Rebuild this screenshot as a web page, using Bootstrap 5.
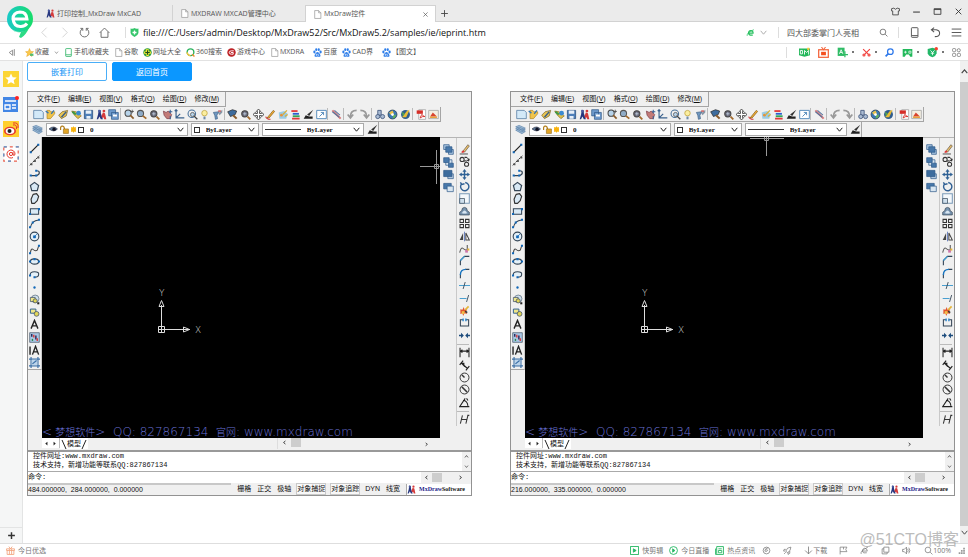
<!DOCTYPE html>
<html lang="zh-CN">
<head>
<meta charset="utf-8">
<meta name="viewport" content="width=device-width, initial-scale=1">
<title>MxDraw控件</title>
<link href="https://cdn.jsdelivr.net/npm/bootstrap@5.3.0/dist/css/bootstrap.min.css" rel="stylesheet">
<style>
:root{--ui:"Open Sans","Noto Sans CJK SC",sans-serif;--edge:#a5a5a5;--face:#f0f0f0}
body{font-family:var(--ui);font-size:7px;line-height:10px;color:#444;background:#fff}
svg{display:block;flex:none}
button{border:0;padding:0;background:none;color:inherit;font:inherit;line-height:inherit}
a{color:inherit;text-decoration:none}
input,select{border:0;padding:0;background:none;font:inherit;color:inherit;outline-offset:0;min-width:0}
select{appearance:none}
.ic{width:11px;height:11px}
.ic-s{width:9px;height:9px}
.big{width:16px;height:16px}

/* browser frame */
.strip{height:22px;background:#ebebeb;border-bottom:1px solid #d2d2d2}
.tabs{padding-left:39px;height:22px}
.tab-item{width:133px;height:17px;padding:0 7px;gap:2px;color:#555}
.tab-item+.tab-item{border-left:1px solid #d2d2d2}
.tab-item.current{width:131px;background:#fff;border:1px solid #d2d2d2;border-bottom:0}
.win{gap:12px;padding-right:5px;color:#333;height:22px}
.brand{position:absolute;left:6px;top:5px;width:28px;height:33px;z-index:3}
.addr{height:22px;border-bottom:1px solid #e2e2e2;padding-left:39px}
.addr .navs{gap:9px;width:87px;border-right:1px solid #ddd;height:11px;color:#555}
.addr .url{font-size:9px;color:#111}
.addr .tools{gap:10px;padding-right:6px;color:#555}
.addr .find{font-size:8px;width:82px}
.vline{width:1px;height:11px;background:#ddd}
.marks{height:17px;border-bottom:1px solid #e2e2e2;padding-left:7px;color:#555}
.marks .list{gap:5px}
.marks .list a{gap:1px}
.marks .exts{gap:8px;padding-right:7px}
.marks .exts>span{gap:4px}
.dot{width:2px;height:2px;background:#777}
.side{width:23px;background:#f5f6f6;border-right:1px solid #e3e4e4;padding-top:10px}
.side .apps{gap:9px}
.side .add{height:16px;border-top:1px solid #e3e4e4;color:#333}
.vbar{width:8px;background:var(--face);color:#444;padding:6px 0}
.vbar .thumb{background:#cdcdcd;margin:6px 0 2px}
.stage{padding:1px 5px 46px 4px}
.cmds{gap:5px;margin-bottom:10px}
.cmds .btn{width:80px;height:19px;font-size:8px;line-height:17px;padding:0;border-radius:2px;border:1px solid #49aef8;color:#1494f5}
.cmds .btn.fill{background:#0b97ff;border-color:#0b97ff;color:#fff}
.foot{height:14px;border-top:1px solid #dedede;padding:0 2px 0 6px;color:#777}
.foot a{gap:3px}
.foot .right{gap:6px}
.foot .minis{gap:12px;padding-right:7px;padding-left:1px}
.stamp{position:absolute;right:9px;bottom:8px;font:16px/18px "Liberation Sans","Noto Sans CJK SC",sans-serif;color:#999;opacity:.65;z-index:3}

/* drawing control */
.pair{gap:38px}
.cad{flex:1 1 0;min-width:0;background:var(--face);border:1px solid #929292;color:#111;font-family:"Liberation Sans","Noto Sans CJK SC",sans-serif}
.menus{height:15px;width:198px;border-right:1px solid var(--edge);border-bottom:1px solid var(--edge);padding-left:9px;gap:8px}
.hbar{height:15px;width:413px;max-width:100%;border-right:1px solid var(--edge);border-bottom:1px solid var(--edge);padding-left:4px}
.hbar button,.vtools button{flex:1 1 0;min-width:0;min-height:0;display:flex;align-items:center;justify-content:center}
.hsep{width:3px;height:12px;border-left:1px solid #bbb;flex:none}
.vsep{height:3px;width:12px;border-top:1px solid #bbb;flex:none;margin-top:2px}
.props{height:15px;width:351px;border-right:1px solid var(--edge);padding-left:4px;gap:3px}
.combo{height:13px;background:#fff;border:1px solid #aaa;padding:0 2px;gap:2px}
.combo select{font:700 7px/10px "Liberation Serif",serif;flex:1 1 auto;width:20px}
.c1{width:144px}.c2{width:69px}.c3{width:104px}
.line-sample{width:36px;height:1px;background:#333}
.sw{width:6px;height:6px;border:1px solid #333;background:#fff}
.vtools{width:15px;padding-top:5px}
.vtools.left{width:14px;height:233px;border-bottom:1px solid var(--edge);border-right:1px solid #ccc}
.vtools.a{height:56px;width:16px}
.vtools.b{height:288px;border-left:1px solid #c9c9c9;flex:none}
.rcol{border-top:1px solid #b5b5b5}
.view{background:#000;height:301px;overflow:hidden}
.view svg{position:absolute;inset:0;width:100%;height:100%}
.adline{position:absolute;left:0;bottom:-3px;color:#6870d4;font:200 12px/16px "DejaVu Sans","Noto Sans CJK SC",sans-serif;white-space:nowrap}
.adline b{font-weight:300;font-size:10px}
.tabrow{height:12px}
.arrows{width:18px;height:10px;background:#fff;border-right:1px solid #bbb}
.mini{width:5px;height:7px}
.sheet{width:28px;height:11px;background:#fff}
.hthumb{width:10px;height:9px;background:#cdcdcd}
.track{width:139px;padding-right:11px}
.hist{border-top:2px solid #999;height:21px;background:#fff;font:7px/9px "Liberation Mono","Noto Sans CJK SC",monospace}
.hist .txt{padding-left:5px}
.hist .sb{width:9px;background:var(--face)}
.prompt{border-top:1px solid #aaa;height:12px;background:#fff;font:7px/10px "Liberation Mono","Noto Sans CJK SC",monospace}
.prompt .sb{width:50px;background:var(--face);padding-left:3px;gap:3px}
.status{height:12px;gap:6px}
.status .pos{border-top:2px solid #c8c8c8;line-height:10px;height:12px;white-space:pre}
.status .on{outline:1px solid #c9c9c9;background:#f8f8f8}
.status .own{width:65px;height:11px;background:#fff;border-left:1px solid #aaa;font:700 6px/9px "Liberation Serif",serif;gap:3px}
.own b{color:#22228a}
</style>
</head>
<body>
<svg width="0" height="0" class="position-absolute" aria-hidden="true"><defs>
<linearGradient id="lg" x1="0" x2="1"><stop offset="0" stop-color="#19c9c9"/><stop offset="1" stop-color="#17dd68"/></linearGradient>
<g id="page"><path d="M3 1h7l4 4v10H3zM10 1v4h4" fill="#fff" stroke="#999" stroke-width="1.3"/></g>
<g id="mx"><path d="M4 1l3 1v4l3 9H7l-2-4-2 4H1l2-7z" fill="#26367f"/><circle cx="5" cy="3" r="2" fill="#4a5aa0"/><path d="M10 5l3 1 2 9h-3l-1-3-2 1-1-3z" fill="#d53a3a"/><circle cx="11.500" cy="3" r="2" fill="#d53a3a"/></g>
<g id="x" fill="none" stroke="currentColor" stroke-width="1.6"><path d="M3 3l10 10M13 3L3 13"/></g>
<g id="plus" fill="none" stroke="currentColor" stroke-width="1.6"><path d="M8 2v12M2 8h12"/></g>
<g id="plusb" fill="none" stroke="currentColor" stroke-width="2.6"><path d="M8 2v12M2 8h12"/></g>
<g id="shirt" fill="none" stroke="currentColor" stroke-width="1.4"><path d="M5 2L1 3v4h2v7h10V7h2V3l-4-1q-3 4-6 0z"/></g>
<g id="min" stroke="currentColor" stroke-width="1.8"><path d="M2 9h12"/></g>
<g id="max" fill="none" stroke="currentColor" stroke-width="1.5"><path d="M2 3h12v10H2zM2 4.5h12"/></g>
<g id="back" fill="none" stroke="#ccc" stroke-width="1.2"><path d="M11 1L4 8l7 7"/></g>
<g id="fwd" fill="none" stroke="#ccc" stroke-width="1.2"><path d="M5 1l7 7-7 7"/></g>
<g id="reload" fill="none" stroke="currentColor" stroke-width="1.2"><path d="M5 2.6a6.3 6.3 0 1 0 6 0M2 2h3.5v3.5M14 2h-3.5v3.5"/></g>
<g id="home" fill="none" stroke="currentColor" stroke-width="1.2"><path d="M1 8.500L8 1.500l7 7M3 7v8h10V7"/></g>
<g id="shield"><path d="M1 1q5 1 7-1 2 2 7 1v8q-1 5-7 7-6-2-7-7z" fill="#35c66b"/><path d="M8 4.500v7M4.500 8h7" stroke="#fff" stroke-width="2.400"/></g>
<g id="e" fill="none" stroke="#26c05f" stroke-width="2.200"><path d="M4.500 9h8Q13 5 8.500 4.500 4.500 5 4.500 9q.5 4.500 7.500 3.500"/><path d="M2 14q-1-6 12-11" stroke-width="1.300"/></g>
<g id="down" fill="none" stroke="currentColor" stroke-width="1.7"><path d="M3 5l5 6 5-6"/></g>
<g id="up" fill="none" stroke="currentColor" stroke-width="2"><path d="M3 11l5-6 5 6"/></g>
<g id="lt" fill="none" stroke="currentColor" stroke-width="2.500"><path d="M11 3L5 8l6 5"/></g>
<g id="rt" fill="none" stroke="currentColor" stroke-width="2.500"><path d="M5 3l6 5-6 5"/></g>
<g id="tl" fill="#222"><path d="M11 2v12L4 8z"/></g><g id="tr" fill="#222"><path d="M5 2v12l7-6z"/></g>
<g id="mag" fill="none" stroke="currentColor" stroke-width="1.3"><circle cx="7" cy="7" r="5"/><path d="M11 11l4 4"/></g>
<g id="phone" fill="none" stroke="currentColor" stroke-width="1.400"><rect x="3.500" y="1" width="9.500" height="14" rx="1"/><path d="M4 12.500h9"/></g>
<g id="gphone" fill="none" stroke="#39b86d" stroke-width="1.500"><rect x="3" y="1" width="10" height="14" rx="1"/><path d="M3 12h10"/></g>
<g id="undo2" fill="none" stroke="currentColor" stroke-width="1.500"><path d="M6 1L2 4l4 3.500M2 4h7q5 1 5 5 0 5-7 5"/></g>
<g id="burger" stroke="currentColor" stroke-width="1.400"><path d="M1 3h14M1 8h14M1 13h14"/></g>
<g id="collapse" fill="none" stroke="#777" stroke-width="1.400"><path d="M10 4L4 8l6 5zM13 2v12"/></g>
<g id="star"><path d="M8 1l2 5 5 .5-4 3.500 1 5-4-3-5 3 1.500-5L1 6.500 6 6z" fill="#fbc94b" stroke="#e8a92c"/><path d="M9 10h6v4H9z" fill="#54bd72"/></g>
<g id="hao"><circle cx="8" cy="8" r="7.500" fill="#2d9e3c"/><path d="M5 2h5v4h4v4h-4v4H6v-4H2V6h3z" fill="#ffe735"/><path d="M4 8h8M8 4v8" stroke="#174f1c" stroke-width="2"/></g>
<g id="ring" fill="none" stroke-width="2.400"><circle cx="8" cy="7.500" r="6" stroke="#26b15b"/><path d="M8 13.500a6 6 0 0 1-6-6" stroke="#ffc53c"/><path d="M11 11l4 4" stroke="#f08d2e"/></g>
<g id="game"><circle cx="8" cy="8" r="7.500" fill="#bd2227"/><path d="M12 5H8q-4 0-4 3t4 3h3V8H7" stroke="#fff" fill="none" stroke-width="1.700"/></g>
<g id="paw" fill="#2d7de9"><ellipse cx="2.500" cy="7" rx="2" ry="2.600"/><ellipse cx="5.800" cy="3" rx="1.900" ry="2.500"/><ellipse cx="10.200" cy="3" rx="1.900" ry="2.500"/><ellipse cx="13.500" cy="7" rx="2" ry="2.600"/><path d="M8 7q2 0 4 3t1 5q-2 1-5 0-3 1-5 0-1-2 1-5t4-3z"/><path d="M5.500 11h1.500v2H5.500zM9 10v3h2" stroke="#fff" fill="none"/></g>
<g id="bm"><path d="M0 2h16v10l-8 2-8-2z" fill="#22b75a"/><path d="M2 5h3v5H2zM8 11V5l3 3 3-3v6" fill="none" stroke="#fff" stroke-width="1.300"/><path d="M12 1h3v4l-1.500-1L12 5z" fill="#ffc83a"/></g>
<g id="tv"><rect x="1" y="4" width="14" height="11" fill="none" stroke="#f4633a" stroke-width="1.800"/><rect x="4.500" y="7" width="7" height="5" fill="#f4501f"/><path d="M5 0l3 4 3-4" stroke="#f4633a" stroke-width="1.500" fill="none"/></g>
<g id="trans"><path d="M1 1h10v12H1z" fill="#2fbc66"/><path d="M3.500 10L6 4l2.500 6M4.500 8h3" stroke="#fff" fill="none" stroke-width="1.200"/><path d="M11.500 6v9M7 11h9" stroke="#2fbc66" stroke-width="1.800"/></g>
<g id="cut" fill="none" stroke="#f1403c" stroke-width="2"><path d="M2 2l9 9M14 2l-9 9"/><circle cx="3.500" cy="12.500" r="1.800"/><circle cx="12.500" cy="12.500" r="1.800"/></g>
<g id="bmag" fill="none" stroke="#2d78ea" stroke-width="2.200"><circle cx="9.500" cy="6.500" r="5"/><path d="M6 10l-5 5" stroke-width="3"/></g>
<g id="pad"><path d="M1 3h14v11h-3l-2-3H6l-2 3H1z" fill="#22b95b"/><path d="M3 7.500h4M5 5.500v4M10 6h3v3h-3z" stroke="#fff" fill="none"/></g>
<g id="gsh"><path d="M1 3l7-2 6 2v6q-1 4-6 6-6-2-7-6z" fill="#22b768"/><path d="M5 5l3 3 3-3M8 8v4M5.500 9h5" stroke="#fff" fill="none" stroke-width="1.200"/><circle cx="13.500" cy="2.500" r="2.500" fill="#f3432f"/></g>
<g id="grid4" fill="none" stroke="#777" stroke-width="1.400"><rect x="1" y="1" width="5.500" height="5.500" rx="1.500"/><circle cx="12" cy="4" r="2.800"/><rect x="1" y="9.500" width="5.500" height="5.500" rx="1.500"/><rect x="9.500" y="9.500" width="5.500" height="5.500" rx="1.500"/></g>
<g id="sstar"><rect width="16" height="16" fill="#fcd535"/><path d="M8 2.500l1.700 3.700 4 .4-3 2.700.9 4L8 11.300l-3.600 2 .9-4-3-2.700 4-.4z" fill="#fff"/></g>
<g id="snews"><rect y="1" width="15" height="15" fill="#4286e5"/><path d="M2 5h11M2 9h5v4H2zM9 9h4M9 12h4" stroke="#fff" stroke-width="1.300" fill="none"/><circle cx="14" cy="2" r="2" fill="#f22"/></g>
<g id="sweibo"><rect width="16" height="16" fill="#ffcf2e"/><ellipse cx="7" cy="10" rx="6" ry="4.300" fill="#e6392e"/><ellipse cx="7" cy="10" rx="4.300" ry="3" fill="#fff"/><circle cx="6.500" cy="10" r="2" fill="#222"/><path d="M10 4q4-1 3.500 4M10 2q6-1 5 5" fill="none" stroke="#e6392e"/></g>
<g id="sat"><rect x=".8" y=".8" width="14.400" height="14.400" fill="#fff" stroke="#e9604e" stroke-width="1.200" stroke-dasharray="3 3"/><rect x=".8" y=".8" width="14.400" height="14.400" fill="none" stroke="#4a9bdc" stroke-width="1.200" stroke-dasharray="3 9"/><circle cx="8" cy="8" r="1.600" fill="none" stroke="#e6392e"/><path d="M10 6v3q2 1 2-1a4 4 0 1 0-2 3.500" fill="none" stroke="#e6392e"/></g>
<g id="gift" fill="none" stroke="#f2a27c" stroke-width="1.500"><path d="M1 5h14v3H1zM2 8v7h12V8M6 5v10M10 5v10M8 5L5 1M8 5l3-4"/></g>
<g id="clip" fill="none" stroke="#26b862" stroke-width="1.600"><rect x="1" y="1" width="14" height="14"/><path d="M6 5l5 3-5 3z" fill="#26b862"/></g>
<g id="live" fill="none" stroke="#26b862" stroke-width="1.600"><circle cx="8" cy="8" r="7"/><path d="M6.500 5l4 3-4 3z" fill="#26b862"/></g>
<g id="hot" fill="none" stroke="#26b862" stroke-width="1.600"><path d="M3 1h12v14H1V5h2zM3 5v9M6 5h6M6 8h6v4H6z"/></g>
<g id="f1" fill="none" stroke="currentColor" stroke-width="1.300"><circle cx="8" cy="8" r="6"/><path d="M11 3q-6 1-6 6 3 2 5-1 0-2-3-1"/></g>
<g id="f2" fill="none" stroke="currentColor" stroke-width="1.300"><path d="M14 2Q7 2 5 9l3 3q6-3 6-10zM5 6H2l-1 3h3M9 11v4l3-2V9M5 11l-3 3"/></g>
<g id="dl" fill="none" stroke="currentColor" stroke-width="1.400"><path d="M8 1v13M2 8l6 6 6-6"/></g>
<g id="flag" fill="none" stroke="currentColor" stroke-width="1.300"><path d="M2 15V2h12l-2 4 2 4H2M8 2v4"/></g>
<g id="f3" fill="none" stroke="currentColor" stroke-width="1.300"><path d="M4 9h9q0-5-5-5-4 1-4 5 1 5 8 3M2 14q-2-5 12-12"/></g>
<g id="f4" fill="none" stroke="currentColor" stroke-width="1.300"><path d="M5 2h9v9H5zM5 5H2v9h9v-3"/></g>
<g id="vol" fill="none" stroke="currentColor" stroke-width="1.300"><path d="M1 6h3l4-4v12l-4-4H1zM10 5q2 3 0 6M12 3q4 5 0 10"/></g>
<g id="rsz" fill="#999"><path d="M11 3h3v3h-3zM11 7h3v3h-3zM7 7h3v3H7zM11 11h3v3h-3zM7 11h3v3H7zM3 11h3v3H3z"/></g>

<!-- drawing tools -->
<g id="new"><path d="M1 2h11l3 3v9H1z" fill="#d3e9f8" stroke="#456f99"/></g>
<g id="open"><path d="M3 2h4l1 2h6v3L8 14H3z" fill="#f0c44a" stroke="#b08420"/><path d="M9 7l4-5M1 3l4 3" stroke="#3577b8" stroke-width="2"/></g>
<g id="opens"><path d="M1 9l5-5 8-2-2 8-7 4z" fill="#e8c553" stroke="#7b6022"/><path d="M5 12l7-8" stroke="#3a5f8a" stroke-width="2"/></g>
<g id="web"><path d="M1 3l6 1 8 6-5 4-5-5z" fill="#dfbe4d" stroke="#8a6d1e"/><circle cx="11" cy="6" r="3.500" fill="#3b8ad0"/><path d="M2 4l5 4" stroke="#3d9a47" stroke-width="3"/></g>
<g id="save"><path d="M2 2h12v12H2z" fill="#4e7fb9" stroke="#1f4574"/><path d="M4 2h8v5H4zM5 10h6v4H5z" fill="#e7eff8"/></g>
<g id="saves"><path d="M1 1h10v9H1zM5 5h10v10H5z" fill="#6f9bcd" stroke="#2a5485"/><path d="M7 8h6v3H7z" fill="#fff"/></g>
<g id="zoomp"><circle cx="6" cy="6" r="4.500" fill="#b7d3ea" stroke="#444" stroke-width="1.500"/><path d="M9 9l5 5" stroke="#8a5c2c" stroke-width="2.500"/><path d="M12 1v5M9.500 3.500h5" stroke="#333"/></g>
<g id="zoom"><circle cx="6.500" cy="6.500" r="4.500" fill="#8fabc6" stroke="#555" stroke-width="1.500"/><path d="M10 10l5 4" stroke="#a36a2c" stroke-width="2.600"/></g>
<g id="zooma"><circle cx="7" cy="7" r="4.500" fill="#667" stroke="#444" stroke-width="1.500"/><path d="M4.500 7h5M7 4.500v5" stroke="#cde"/><path d="M11 11l4 4" stroke="#a36a2c" stroke-width="2.500"/></g>
<g id="hand"><path d="M2 3l4 2 3-2 5 5-2 6H7L3 9z" fill="#c37b78" stroke="#7a3c48"/><path d="M12 1v5M10 4h5M12 10v5" stroke="#345f94" stroke-width="1.500"/></g>
<g id="axes" fill="none" stroke="#3a618c" stroke-width="1.700"><path d="M3 1v12h12M3 13l6-6M1 3l2-2 2 2"/></g>
<g id="orbit"><circle cx="7" cy="7" r="5.500" fill="none" stroke="#456f99" stroke-width="1.500"/><circle cx="8" cy="8" r="3" fill="#b7d3ea" stroke="#444"/><path d="M10 10l5 5" stroke="#444" stroke-width="2"/></g>
<g id="bulb"><circle cx="8" cy="6" r="4" fill="#fbeea0" stroke="#b99b2f"/><path d="M6.500 11h3v4h-3z" fill="#718daa"/></g>
<g id="filter"><path d="M2 5l8-1-3 5 1 5-3 1-1-6z" fill="#7199c1" stroke="#3c5f85"/><path d="M9 6l6-5v4l-4 4z" fill="#8a97a6"/><path d="M9 3h4" stroke="#c55" stroke-width="2"/></g>
<g id="prev"><path d="M1 4l7-3 6 2-2 5-7 3z" fill="#3e6c9d" stroke="#222"/><path d="M9 9l5 5" stroke="#8a5c2c" stroke-width="3"/></g>
<g id="pan" fill="#fff" stroke="#333" stroke-width="1.200"><path d="M8 0l3 3.500H9.500v3h3V5L16 8l-3.500 3V9.500h-3v3H11L8 16l-3-3.500h1.500v-3h-3V11L0 8l3.500-3v1.500h3v-3H5z"/></g>
<g id="pen"><path d="M3 13L12 2l2 1.500L6 13z" fill="#efad35" stroke="#855914"/><path d="M1 11q1 4 7 4" fill="none" stroke="#c33" stroke-width="1.500"/></g>
<g id="palette"><path d="M1 5l8-2 5 4-2 7H2z" fill="#9bcce5"/><circle cx="5" cy="9" r="2" fill="#e79237"/><path d="M7 8l6-6M10 11l4-3" stroke="#d7b03d" stroke-width="2"/></g>
<g id="layersc" stroke-width="2.600"><path d="M2 3h9" stroke="#e23a3a"/><path d="M4 7h9" stroke="#2d5ecf"/><path d="M4 10.500h10" stroke="#31a558"/><path d="M3 14h11" stroke="#df3b3b"/></g>
<g id="brush"><path d="M15 1l-6 9-3-2z" fill="#333"/><path d="M4 9l5 2h5v3H1z" fill="#222"/></g>
<g id="scalebox" fill="#fff" stroke="#4a83b7" stroke-width="1.300"><path d="M1 2h14v12H1zM5 11l6-6M7 5h4v4"/></g>
<g id="dims"><path d="M2 2l8 8 4 4" stroke="#d97a7a" stroke-width="3"/><path d="M2 4l10 8M5 2l8 7" stroke="#58749c" stroke-width="1.500"/></g>
<g id="undo" fill="none" stroke="#999" stroke-width="2.600"><path d="M14 2Q5 2 5 11M1 8l4 5 4-5"/></g>
<g id="redo" fill="none" stroke="#999" stroke-width="2.600"><path d="M2 2q9 0 9 9M7 8l4 5 4-5"/></g>
<g id="find" fill="#a9bbd3" stroke="#3f557c" stroke-width="1.200"><path d="M4 2h5v7H4z"/><circle cx="4" cy="11" r="3"/><circle cx="11" cy="11" r="3"/></g>
<g id="globe"><circle cx="8" cy="8" r="6.500" fill="#3a78b4" stroke="#234"/><path d="M3 5l5-3 2 4-4 3z" fill="#ecc348"/><path d="M9 9l4-1-1 4-4 2z" fill="#62b356"/><circle cx="8" cy="8" r="2" fill="#fff"/></g>
<g id="globe2"><circle cx="8" cy="8" r="6.500" fill="#2f5c8f"/><path d="M3 12l7-9 4-2-5 11z" fill="#e9bb36"/><path d="M3 4l4 3-3 4z" fill="#55a84e"/></g>
<g id="pdf"><path d="M4 1h10v14H4z" fill="#fff" stroke="#999"/><path d="M1 2h9v5H1z" fill="#d52d27"/><path d="M6 13q3-7 3-5t4 3q-3-1-7 2" fill="none" stroke="#d52d27" stroke-width="1.300"/></g>
<g id="pic"><path d="M1 2h14v12H1z" fill="#f4efe3" stroke="#999"/><path d="M3 11l4-6 3 3 3 3z" fill="#d9432e"/><path d="M3 12h10" stroke="#e89b32" stroke-width="2"/></g>
<g id="layers" fill="#9fbdd8" stroke="#5c82a9"><path d="M1 9l5-2 9 4-5 3zM1 6.500l5-2 9 4-5 3zM1 4l5-2 9 4-5 3z"/></g>
<g id="eye"><path d="M0 7q8-7 15 0-6 7-15 0z" fill="#5b7896" stroke="#223" /><circle cx="9" cy="7.500" r="3" fill="#112"/></g>
<g id="lock"><path d="M1 9V5q1-4 4-3t3 5" fill="none" stroke="#b17d19" stroke-width="2.200"/><path d="M6 7h9v8H6z" fill="#e2a628" stroke="#8f6310"/></g>
<g id="sun"><path d="M8 0l2.400 3 3.600-1-.5 3.500L16 8l-2.500 2.400.5 3.600-3.600-1L8 16l-2.400-3L2 14l.5-3.600L0 8l2.500-2.500L2 2l3.600 1z" fill="#f7b20d"/></g>

<g id="line"><path d="M2 14L14 2" stroke="#222" stroke-width="1.700"/><path d="M1 12h3v3H1zM12 1h3v3h-3z" fill="#1268b8"/></g>
<g id="xline"><path d="M1 15L15 1" stroke="#333" stroke-width="1.400" stroke-dasharray="4 2"/><path d="M2 12h3v3H2zM7 7h3v3H7zM12 2h3v3h-3z" fill="#555"/></g>
<g id="pline"><path d="M3 11h8q4-1 4-4t-4-3" fill="none" stroke="#345" stroke-width="1.700"/><path d="M1 9.500h3v3H1zM9 9.500h3v3H9zM9 2.500h3v3H9z" fill="#1268b8"/></g>
<g id="poly"><path d="M8 2l6 4.500L12 14H4L2 6.500z" fill="#d9e9f5" stroke="#345" stroke-width="1.700"/></g>
<g id="blob"><path d="M6 2l5-1 3 4-2 6-4 4H4l-1-6z" fill="#d9e9f5" stroke="#333" stroke-width="1.700" stroke-linejoin="round"/></g>
<g id="rect"><path d="M2 4h12v8H2z" fill="#d9e9f5" stroke="#345" stroke-width="1.500"/><path d="M0 10h3v3H0zM13 3h3v3h-3z" fill="#1268b8"/></g>
<g id="arc"><path d="M2 14Q4 4 14 3" fill="none" stroke="#345" stroke-width="1.600"/><path d="M0 12h3v3H0zM4 5h3v3H4zM13 1h3v3h-3z" fill="#1268b8"/></g>
<g id="circ"><circle cx="8" cy="8" r="6.300" fill="#e4f0f8" stroke="#345" stroke-width="1.600"/><path d="M8 8l4-4M6.500 7h3v3h-3z" stroke="#1268b8" fill="#1268b8"/></g>
<g id="spline"><path d="M2 13Q3 5 6 8t6 1l2-6" fill="none" stroke="#444" stroke-width="1.500"/><path d="M0 12h3v3H0zM13 1h3v3h-3z" fill="#1268b8"/></g>
<g id="ell"><ellipse cx="8" cy="8" rx="6" ry="3.800" fill="#e4f0f8" stroke="#345" stroke-width="1.700"/><path d="M0 6.500h3v3H0zM13 6.500h3v3h-3zM6.500 3h3v3h-3z" fill="#1268b8"/></g>
<g id="ella"><path d="M2 9Q1 4 8 4t6 4q0 4-6 4" fill="#e4f0f8" stroke="#345" stroke-width="1.600"/><path d="M0 8h3v3H0zM6.500 10.500h3v3h-3z" fill="#1268b8"/></g>
<g id="pt"><circle cx="8" cy="8" r="1.700" fill="#1268b8"/></g>
<g id="blk"><circle cx="9" cy="7" r="5.500" fill="#cfe0ec" stroke="#567"/><path d="M2 5h7v6H2z" fill="#efe68a" stroke="#346"/><circle cx="9" cy="10" r="3" fill="#e0d458" stroke="#346"/><path d="M12 12h3v3h-3z" fill="#222"/></g>
<g id="blk2"><path d="M2 3h8v6H2z" fill="#efe68a" stroke="#2c5f92" stroke-width="1.400"/><circle cx="11" cy="10" r="3.500" fill="#e0d458" stroke="#346"/></g>
<g id="txt" fill="none" stroke="#222" stroke-width="2"><path d="M3 14L8 2l5 12M5 10h6"/></g>
<g id="hatch"><path d="M1 1h14v14H1z" fill="#a9c6e4" stroke="#456"/><path d="M3 3h2v4H3zM9 5h2v6H9z" fill="#225"/><path d="M6 4h2v4H6zM11 9h2v4h-2z" fill="#d33"/><path d="M4 10h2v3H4z" fill="#2a8a4a"/></g>
<g id="mtxt" fill="none" stroke="#222" stroke-width="2"><path d="M1.500 2v12M5 14l4.500-12L14 14M6 10h6.500"/></g>
<g id="frame" fill="none" stroke="#3a6ea5" stroke-width="1.700"><path d="M3 0v16M13 0v16M0 3h16M0 13h16"/><path d="M4 4h8v8H4z" fill="#bcd4ea" stroke="none"/><path d="M5 10l6-5"/></g>

<g id="o1" fill="#4878aa" stroke="#2b5888"><path d="M1 1h8v7H1z" fill="#a8c4df"/><path d="M8 8h7v7H8z" fill="#a8c4df"/><path d="M4 4h9v8H4z"/></g>
<g id="o2" fill="#4878aa" stroke="#2b5888"><path d="M4 4h9v8H4z" fill="#d9e6f1"/><path d="M1 1h8v7H1zM8 9h7v6H8z"/></g>
<g id="o3" stroke="#2b5888"><path d="M7 7h8v7H7z" fill="#b8cde2"/><path d="M1 2h12v9H1z" fill="#3d6c9d"/></g>
<g id="o4" stroke="#2b5888"><path d="M1 2h11v8H1z" fill="#4878aa"/><path d="M6 6h9v8H6z" fill="#d9e6f1"/></g>
<g id="erase"><path d="M6 10l7-9 2 2-7 9z" fill="#e7c06a" stroke="#654"/><path d="M3 12l3-3 2 2-2 2z" fill="#d33"/><path d="M1 14.500h12" stroke="#333" stroke-width="1.200"/></g>
<g id="copy" fill="none" stroke="#333" stroke-width="1.500"><circle cx="4.500" cy="5" r="3"/><circle cx="11" cy="12" r="3"/><path d="M8 2h3q3 1 3 5M11 6l3 1 1-3M7 8q2-2 4 0"/></g>
<g id="move" fill="#2f6195"><path d="M8 0l3 4H9v3h3V5l4 3-4 3V9H9v3h2l-3 4-3-4h2V9H4v2L0 8l4-3v2h3V4H5z"/></g>
<g id="rot" fill="none" stroke="#2f5f93" stroke-width="2"><path d="M4 4a6 6 0 1 0 5-1.800M2 2l2 3 4-1"/></g>
<g id="scale"><path d="M1 1h14v14H1z" fill="#f4f8fb" stroke="#7b9ab8" stroke-width="1.500"/><path d="M1 8h7v7H1z" fill="#cfe0ee" stroke="#345"/></g>
<g id="off"><path d="M1 13V9l3-2q0-5 4-5t4 5l3 2v4z" fill="#7894b0" stroke="#345"/><path d="M5 11V9q3-5 6 0v2z" fill="#d7e5f1"/></g>
<g id="arr" fill="none" stroke="#333" stroke-width="1.500"><path d="M1.500 2h5v4.500h-5zM9.500 2h5v4.500h-5zM1.500 9.500h5V14h-5zM9.500 9.500h5V14h-5z"/></g>
<g id="mir"><path d="M6 3v10H1z" fill="#444"/><path d="M10 3v10h5z" fill="#fff" stroke="#444" stroke-width="1.500"/><path d="M8 1v14" stroke="#35a"/></g>
<g id="sped"><path d="M1 14Q3 5 6 8t6 2V3" fill="none" stroke="#555" stroke-width="1.500"/><path d="M9 10h4v4H9z" fill="#c7a"/><path d="M12 8h3v3h-3z" fill="#e5b53a"/></g>
<g id="cham" fill="none" stroke="#345" stroke-width="1.600"><path d="M2 15V8l6-6h7" /><path d="M2 8l6-6" stroke="#38a0dc"/></g>
<g id="fil" fill="none" stroke="#345" stroke-width="1.600"><path d="M2 15V9M9 2h6"/><path d="M2 10q0-8 8-8" stroke="#1774c0" stroke-width="2"/></g>
<g id="trim" fill="none"><path d="M0 8h16" stroke="#4a9fd0" stroke-width="1.500"/><path d="M9 3l-3 10" stroke="#345" stroke-width="1.300"/></g>
<g id="ext" fill="none"><path d="M1 8h10" stroke="#4a9fd0" stroke-width="1.500"/><path d="M14 3l-3 10" stroke="#345" stroke-width="1.300"/></g>
<g id="boom"><path d="M2 6l3 1 2-4 1 4 4-1-2 4 2 3-4-1-2 4-1-4-3 1z" fill="#e2542c"/><path d="M9 7l5-5" stroke="#e5b53a" stroke-width="2.500"/><path d="M4 9h4v4H4z" fill="#f0c24a"/><path d="M9 9l3 2" stroke="#333" stroke-width="2"/></g>
<g id="brk" fill="none" stroke="#345" stroke-width="1.500"><path d="M6 4H2v9h12V4h-4"/><path d="M6 2v4M10 2v4" stroke="#2a86d0" stroke-width="2"/></g>
<g id="join" fill="#1c4b7c"><path d="M0 7h3V4l4 4-4 4V9H0zM16 7h-3V4L9 8l4 4V9h3z"/></g>
<g id="dlin" fill="none" stroke="#222" stroke-width="1.500"><path d="M1.500 1v14M14.500 1v14M2 6h12M5 4L2 6l3 2M11 4l3 2-3 2"/></g>
<g id="dali" fill="none" stroke="#222" stroke-width="1.700"><path d="M4 5l8 7M1 7l5-6M10 15l5-6M4 5h3v3z"/></g>
<g id="drad" fill="none" stroke="#333" stroke-width="1.400"><circle cx="8" cy="8" r="6.500"/><path d="M8 8L4 4" stroke-width="2"/></g>
<g id="ddia" fill="none" stroke="#333" stroke-width="1.400"><circle cx="8" cy="8" r="6.500"/><path d="M4 4l8 8" stroke-width="2.400"/></g>
<g id="dang" fill="none" stroke="#222" stroke-width="1.500"><path d="M15 14H1L9 2M6 5q6 0 7 8M11 2l2 3"/></g>
<g id="ded" fill="none" stroke="#333" stroke-width="1.500"><path d="M5 2L2 14M13 2l-3 12M4 8h8M12 2h3"/></g>
</defs></svg>

<div class="d-flex flex-column min-vh-100 position-relative">
<header>
  <svg class="brand" viewBox="0 0 28 33" aria-label="浏览器"><path d="M6 25q8 5 17-2-3 7-8 10l-2-1 2-5q-5 1-9-2z" fill="#2ddb85"/><circle cx="14" cy="14" r="13" fill="url(#lg)"/><path d="M7 14h14q-.5-7-7-7-7 .5-7 7 1 8 8 7.500 4-.3 6-3" fill="none" stroke="#fff" stroke-width="3"/></svg>
  <div class="strip d-flex justify-content-between">
    <nav class="tabs d-flex align-items-end" aria-label="标签页">
      <a href="#" class="tab-item d-flex align-items-center"><svg class="ic-s" viewBox="0 0 16 16"><use href="#mx"/></svg>打印控制_MxDraw MxCAD</a>
      <a href="#" class="tab-item d-flex align-items-center"><svg class="ic-s" viewBox="0 0 16 16"><use href="#page"/></svg>MXDRAW MXCAD管理中心</a>
      <a href="#" class="tab-item current d-flex align-items-center"><svg class="ic-s" viewBox="0 0 16 16"><use href="#page"/></svg>MxDraw控件<svg class="mini ms-auto" viewBox="2 2 12 12"><use href="#x"/></svg></a>
      <button class="px-1 mb-1" aria-label="新标签页"><svg class="ic-s" viewBox="0 0 16 16"><use href="#plus"/></svg></button>
    </nav>
    <div class="win d-flex align-items-center">
      <button aria-label="皮肤" data-i="shirt"></button><button aria-label="最小化" data-i="min"></button><button aria-label="最大化" data-i="max"></button><button aria-label="关闭" data-i="x"></button>
    </div>
  </div>
  <div class="addr d-flex align-items-center">
    <div class="navs d-flex align-items-center flex-shrink-0"><button aria-label="后退" data-i="back" data-c="ic"></button><button aria-label="前进" data-i="fwd" data-c="ic"></button><button aria-label="刷新" data-i="reload" data-c="ic"></button><button aria-label="主页" data-i="home" data-c="ic"></button></div>
    <svg class="ic-s ms-1" viewBox="0 0 16 16"><use href="#shield"/></svg>
    <input class="url flex-grow-1 ms-1" aria-label="地址" value="file:///C:/Users/admin/Desktop/MxDraw52/Src/MxDraw5.2/samples/ie/ieprint.htm">
    <div class="tools d-flex align-items-center">
      <button aria-label="极速模式" class="d-flex align-items-center gap-1"><svg class="ic-s" viewBox="0 0 16 16"><use href="#e"/></svg><svg class="ic-s" viewBox="0 0 16 16" color="#aaa"><use href="#down"/></svg></button>
      <span class="d-flex align-items-center gap-2"><i class="vline"></i><input class="find" aria-label="搜索" value="四大部委掌门人亮相"></span>
      <button aria-label="搜索" data-i="mag"></button><i class="vline"></i>
      <button aria-label="手机" data-i="phone" data-c="ic"></button><button aria-label="恢复" data-i="undo2" data-c="ic"></button><button aria-label="菜单" data-i="burger" data-c="ic"></button>
    </div>
  </div>
  <div class="marks d-flex align-items-center justify-content-between">
    <nav class="list d-flex align-items-center" aria-label="收藏栏">
      <button aria-label="收起" class="me-1" data-i="collapse"></button>
      <a href="#" class="d-flex align-items-center"><svg class="ic-s" viewBox="0 0 16 16"><use href="#star"/></svg>收藏<svg class="mini ms-1" viewBox="0 0 16 16"><use href="#down"/></svg></a>
      <a href="#" class="d-flex align-items-center"><svg class="ic-s" viewBox="0 0 16 16"><use href="#gphone"/></svg>手机收藏夹</a>
      <a href="#" class="d-flex align-items-center"><svg class="ic-s" viewBox="0 0 16 16"><use href="#page"/></svg>谷歌</a>
      <a href="#" class="d-flex align-items-center"><svg class="ic-s" viewBox="0 0 16 16"><use href="#hao"/></svg>网址大全</a>
      <a href="#" class="d-flex align-items-center"><svg class="ic-s" viewBox="0 0 16 16"><use href="#ring"/></svg>360搜索</a>
      <a href="#" class="d-flex align-items-center"><svg class="ic-s" viewBox="0 0 16 16"><use href="#game"/></svg>游戏中心</a>
      <a href="#" class="d-flex align-items-center"><svg class="ic-s" viewBox="0 0 16 16"><use href="#page"/></svg>MXDRA</a>
      <a href="#" class="d-flex align-items-center ms-1"><svg class="ic-s" viewBox="0 0 16 16"><use href="#paw"/></svg>百度</a>
      <a href="#" class="d-flex align-items-center"><svg class="ic-s" viewBox="0 0 16 16"><use href="#paw"/></svg>CAD界</a>
      <a href="#" class="d-flex align-items-center ms-1"><svg class="ic-s" viewBox="0 0 16 16"><use href="#paw"/></svg>【图文】</a>
    </nav>
    <div class="exts d-flex align-items-center">
      <i class="vline me-1"></i><button aria-label="书签" data-i="bm" data-c="ic"></button><button aria-label="视频" data-i="tv" data-c="ic"></button>
      <span class="d-flex align-items-center"><button aria-label="翻译" data-i="trans" data-c="ic"></button><i class="dot"></i></span>
      <span class="d-flex align-items-center"><button aria-label="截图" data-i="cut"></button><i class="dot"></i></span>
      <button aria-label="查找" data-i="bmag"></button>
      <span class="d-flex align-items-center"><button aria-label="游戏" data-i="pad" data-c="ic"></button><i class="dot"></i></span>
      <span class="d-flex align-items-center"><button aria-label="网银" data-i="gsh" data-c="ic"></button><i class="dot"></i></span>
      <button aria-label="扩展" data-i="grid4"></button>
    </div>
  </div>
</header>

<div class="d-flex flex-grow-1">
  <aside class="side d-flex flex-column flex-shrink-0 justify-content-between">
    <div class="apps d-flex flex-column align-items-center">
      <button aria-label="收藏" data-i="sstar" data-c="big"></button><button aria-label="新闻" data-i="snews" data-c="big"></button><button aria-label="微博" data-i="sweibo" data-c="big"></button><button aria-label="邮箱" data-i="sat" data-c="big"></button>
    </div>
    <button class="add d-flex align-items-center justify-content-center" aria-label="添加" data-i="plusb"></button>
  </aside>
  <main class="stage flex-grow-1">
    <div class="cmds d-flex"><button class="btn">嵌套打印</button><button class="btn fill">返回首页</button></div>
    <div class="pair d-flex" id="pair"></div>
  </main>
  <div class="vbar d-flex flex-column align-items-center" aria-hidden="true">
    <svg class="ic-s" viewBox="0 0 16 16"><use href="#up"/></svg><div class="thumb flex-grow-1 w-100"></div><svg class="ic-s" viewBox="0 0 16 16"><use href="#down"/></svg>
  </div>
</div>

<footer class="foot d-flex align-items-center justify-content-between">
  <a href="#" class="d-flex align-items-center"><svg class="ic-s" viewBox="0 0 16 16"><use href="#gift"/></svg>今日优选</a>
  <div class="right d-flex align-items-center">
    <a href="#" class="d-flex align-items-center"><svg class="ic-s" viewBox="0 0 16 16"><use href="#clip"/></svg>快剪辑</a>
    <a href="#" class="d-flex align-items-center"><svg class="ic-s" viewBox="0 0 16 16"><use href="#live"/></svg>今日直播</a>
    <a href="#" class="d-flex align-items-center"><svg class="ic-s" viewBox="0 0 16 16"><use href="#hot"/></svg>热点资讯</a>
    <div class="minis d-flex align-items-center">
      <button aria-label="加速" data-i="f1"></button><button aria-label="清理" data-i="f2"></button>
      <button class="d-flex align-items-center"><svg class="ic-s" viewBox="0 0 16 16"><use href="#dl"/></svg>下载</button>
      <button aria-label="举报" data-i="flag"></button><button aria-label="内核" data-i="f3"></button><button aria-label="窗口" data-i="f4"></button><button aria-label="声音" data-i="vol"></button>
    </div>
    <button class="d-flex align-items-center"><svg class="ic-s" viewBox="0 0 16 16"><use href="#mag"/></svg>100%</button>
    <svg class="ic-s" viewBox="0 0 16 16"><use href="#rsz"/></svg>
  </div>
</footer>
<div class="stamp">@51CTO博客</div>
</div>

<template id="cad">
<section class="cad">
  <div class="menus d-flex align-items-center"><button>文件(<u>F</u>)</button><button>编辑(<u>E</u>)</button><button>视图(<u>V</u>)</button><button>格式(<u>O</u>)</button><button>绘图(<u>D</u>)</button><button>修改(<u>M</u>)</button></div>
  <div class="hbar d-flex align-items-center" data-tools="new open opens web save mx saves | zoomp zoom zooma hand axes orbit bulb filter | prev zooma pan pen palette layersc brush scalebox | dims | undo redo | find globe globe2 | pdf pic"></div>
  <div class="props d-flex align-items-center">
    <svg class="ic" viewBox="0 0 16 16"><use href="#layers"/></svg>
    <label class="combo c1 d-flex align-items-center"><svg class="ic-s" viewBox="0 0 16 16"><use href="#eye"/></svg><svg class="ic-s" viewBox="0 0 16 16"><use href="#lock"/></svg><svg class="mini" viewBox="2 0 12 16"><use href="#sun"/></svg><i class="sw"></i><select class="ms-1" aria-label="图层"><option>0</option></select><svg class="ic-s" viewBox="0 0 16 16"><use href="#down"/></svg></label>
    <label class="combo c2 d-flex align-items-center"><i class="sw"></i><select class="ms-1" aria-label="颜色"><option>ByLayer</option></select><svg class="ic-s" viewBox="0 0 16 16"><use href="#down"/></svg></label>
    <label class="combo c3 d-flex align-items-center"><i class="line-sample"></i><select class="ms-1" aria-label="线型"><option>ByLayer</option></select><svg class="ic-s" viewBox="0 0 16 16"><use href="#down"/></svg></label>
    <svg class="ic" viewBox="0 0 16 16"><use href="#brush"/></svg>
  </div>
  <div class="d-flex">
    <div class="vtools left d-flex flex-column flex-shrink-0" data-tools="line xline pline poly blob rect arc circ spline ell ella pt blk blk2 txt hatch mtxt frame"></div>
    <div class="flex-grow-1">
      <div class="view position-relative">
        <svg fill="none" stroke="#ddd">
          <path d="M116.500 189.500h6v6h-6zM119.500 168v27M117 192.500H148M117 169.500l2.500-6 2.500 6zM141.500 190l6 2.500-6 2.500z"/>
          <text x="117" y="159" fill="#ddd" stroke="none" font-family="DejaVu Sans, sans-serif" font-size="9" font-weight="200">Y</text>
          <text x="153" y="196" fill="#ddd" stroke="none" font-family="DejaVu Sans, sans-serif" font-size="9" font-weight="200">X</text>
          <path class="cross" stroke="#999"/>
        </svg>
        <div class="adline">&lt;<b> 梦想软件</b>&gt;&nbsp; QQ: 827867134&nbsp; <b>官网</b>: www.mxdraw.com</div>
      </div>
      <div class="tabrow d-flex align-items-start">
        <div class="arrows d-flex justify-content-around align-items-center"><button aria-label="上一页" data-i="tl" data-c="mini"></button><button aria-label="下一页" data-i="tr" data-c="mini"></button></div>
        <button class="sheet position-relative"><svg class="position-absolute" width="28" height="11" fill="none" stroke="#222"><path d="M2 1l4 9M26 1l-4 9"/></svg>模型</button>
        <div class="flex-grow-1 d-flex justify-content-end pe-1"><i class="vline"></i></div>
        <div class="d-flex align-items-center gap-1"><svg class="mini" viewBox="0 0 16 16"><use href="#lt"/></svg><i class="hthumb"></i></div>
        <div class="track d-flex justify-content-end pt-1"><svg class="mini" viewBox="0 0 16 24"><use href="#rt"/></svg></div>
      </div>
    </div>
    <div class="rcol d-flex flex-shrink-0">
      <div class="vtools a d-flex flex-column" data-tools="o1 o2 o3 o4"></div>
      <div class="vtools b d-flex flex-column" data-tools="erase copy move rot scale off arr mir sped cham fil trim ext boom brk join | dlin dali drad ddia dang | ded"></div>
    </div>
  </div>
  <div class="hist d-flex"><div class="txt flex-grow-1"><div>控件网址:www.mxdraw.com</div><div>技术支持，新增功能等联系QQ:827867134</div></div><div class="sb d-flex flex-column justify-content-around align-items-center"><svg class="mini" viewBox="0 0 16 16"><use href="#up"/></svg><svg class="mini" viewBox="0 0 16 16"><use href="#down"/></svg></div></div>
  <label class="prompt d-flex"><span>命令:</span><input class="flex-grow-1" aria-label="命令"><span class="sb d-flex align-items-center"><svg class="mini" viewBox="0 0 16 16"><use href="#lt"/></svg><i class="hthumb"></i><svg class="mini ms-auto me-2" viewBox="0 0 16 16"><use href="#rt"/></svg></span></label>
  <div class="status d-flex align-items-center"><div class="pos flex-grow-1"></div><button>栅格</button><button>正交</button><button>极轴</button><button class="on">对象捕捉</button><button class="on">对象追踪</button><button>DYN</button><button>线宽</button><div class="own d-flex align-items-center"><svg class="ic-s" viewBox="0 0 16 16"><use href="#mx"/></svg><span><b>MxDraw</b>Software</span></div></div>
</section>
</template>
<script src="https://cdn.jsdelivr.net/npm/bootstrap@5.3.0/dist/js/bootstrap.bundle.min.js"></script>
<script>
const glyph = (id, cls) => `<svg class="${cls}" viewBox="0 0 16 16"><use href="#${id}"/></svg>`;
const views = [
  { pos: '484.000000,  284.000000,  0.000000', x: 395, y: 30 },
  { pos: '216.000000,  335.000000,  0.000000', x: 242, y: 2 }
];
for (const v of views) {
  const node = document.getElementById('cad').content.cloneNode(true);
  node.querySelector('.pos').textContent = v.pos;
  node.querySelector('.cross').setAttribute('d',
    `M${v.x - 17} ${v.y - .5}h34M${v.x - .5} ${v.y - 17}v34M${v.x - 2.5} ${v.y - 2.5}h4v4h-4z`);
  for (const bar of node.querySelectorAll('[data-tools]')) {
    const sep = bar.classList.contains('hbar') ? 'hsep' : 'vsep';
    bar.innerHTML = bar.dataset.tools.split(' ').map(t =>
      t === '|' ? `<i class="${sep}"></i>` : `<button aria-label="${t}">${glyph(t, 'ic')}</button>`).join('');
  }
  document.getElementById('pair').append(node);
}
for (const b of document.querySelectorAll('button[data-i]')) b.innerHTML = glyph(b.dataset.i, b.dataset.c || 'ic-s');
</script>
</body>
</html>
